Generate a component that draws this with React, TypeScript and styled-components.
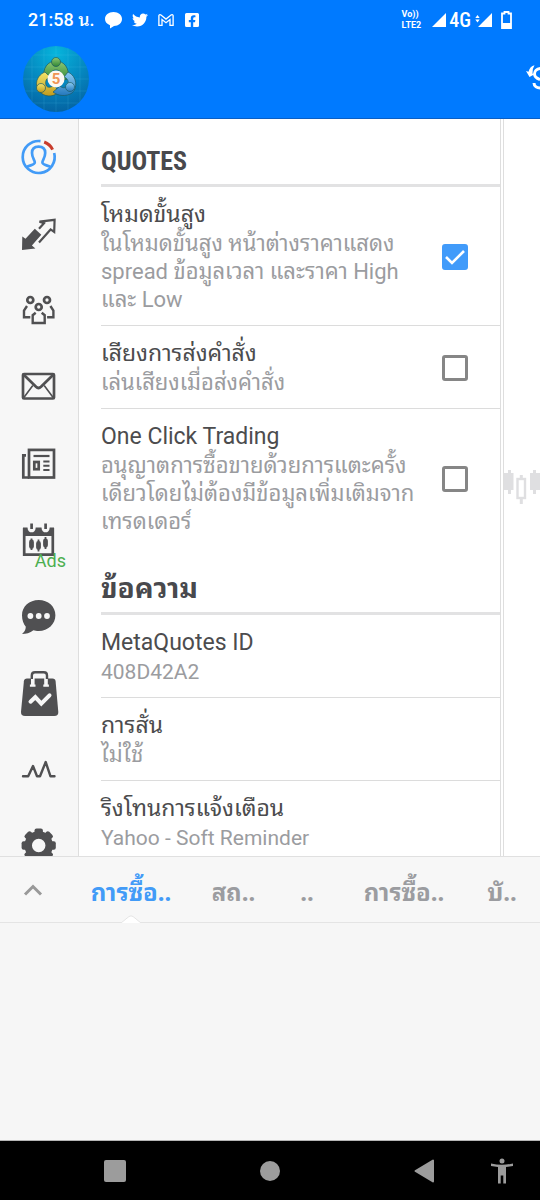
import React, { useState } from "react";
import styled, { createGlobalStyle } from "styled-components";
import { FaTwitter, FaFacebookSquare } from "react-icons/fa";

const ink = "#505052";
const muted = "#9b9ca0";
const blue = "#429bf7";
const thai = `"Noto Sans Thai Looped", "Noto Looped Thai", "Loma", "Noto Sans Thai", "Noto Sans", sans-serif`;

const GlobalStyle = createGlobalStyle`
  * { box-sizing: border-box; }
  body {
    margin: 0;
    background: #f6f6f6;
    font-family: Roboto, ${thai};
  }
  button { font: inherit; border: 0; padding: 0; background: none; cursor: pointer; }
`;

const Screen = styled.div`
  display: flex;
  flex-direction: column;
  height: 100vh;
`;

const Header = styled.header`
  background: #007aff;
  color: #fff;
  border-bottom: 1px solid #0a5fc4;
`;

const StatusBar = styled.div`
  display: flex;
  align-items: center;
  height: 40px;
  padding: 0 27px 0 28px;
`;

const Clock = styled.time`
  font-size: 18px;
  font-weight: 500;
  line-height: 24px;
  white-space: nowrap;
  width: 76px;
`;

const StatusIcons = styled.div<{ $gap: number }>`
  display: flex;
  align-items: center;
  gap: ${(p) => p.$gap}px;
`;

const Signals = styled(StatusIcons)`
  margin-left: auto;
`;

const Volte = styled.span`
  display: grid;
  font-size: 9px;
  font-weight: 700;
  line-height: 11px;
  margin-right: 8px;
`;

const Network = styled.span`
  font-family: "Roboto Condensed", Roboto, sans-serif;
  font-size: 20px;
  font-weight: 500;
  line-height: 20px;
`;

const AppBar = styled.div`
  display: flex;
  justify-content: space-between;
  align-items: center;
  height: 78px;
  padding-left: 22px;
`;

const BarButton = styled.button`
  display: flex;
  color: inherit;
`;

const Main = styled.main`
  display: flex;
  flex: 1;
  min-height: 0;
  overflow: hidden;
  background: #fff;
`;

const Sidebar = styled.nav`
  display: grid;
  grid-template-rows: repeat(10, 1fr);
  flex: 0 0 79px;
  height: 766px;
  background: #f7f7f7;
  border-right: 1px solid #dedede;
`;

const SideButton = styled.button`
  position: relative;
  display: grid;
  place-items: center;
  color: ${ink};
`;

const Glyph = styled.svg`
  width: 40px;
  height: 40px;
  overflow: visible;
  fill: none;
  stroke: currentColor;
  stroke-width: 2.7;
`;

const AdsTag = styled.span`
  position: absolute;
  right: 12px;
  bottom: 8px;
  color: #4caf50;
  font-size: 18px;
  line-height: 20px;
`;

const Settings = styled.div`
  flex: 1;
  min-width: 0;
  padding-left: 22px;
  border-right: 1px solid #dedede;
`;

const Heading = styled.h2<{ $size?: number }>`
  margin: 0;
  padding: 26px 0 7px;
  border-bottom: 3px solid #e2e2e3;
  color: #48494d;
  font-family: "Roboto Condensed", Roboto, ${thai};
  font-size: ${(p) => p.$size ?? 26}px;
  font-weight: 700;
  line-height: 32px;
`;

const Row = styled.div<{ $last?: boolean }>`
  display: flex;
  align-items: center;
  justify-content: space-between;
  padding: 13px 32px 11px 0;
  border-bottom: ${(p) => (p.$last ? "0" : "1px solid #dcdcdc")};
`;

const RowText = styled.label`
  display: block;
  white-space: nowrap;
`;

const RowTitle = styled.span`
  display: block;
  color: #4c4c4e;
  font-size: 23px;
  line-height: 30px;
`;

const RowNote = styled.span<{ $latin: boolean }>`
  display: block;
  color: ${muted};
  font-size: ${(p) => (p.$latin ? 21 : 22)}px;
  line-height: 28px;
`;

const Tick = styled.input`
  appearance: none;
  flex: none;
  width: 26px;
  height: 26px;
  margin: 0;
  border: 3px solid #868686;
  border-radius: 3px;
  &:checked {
    border-color: #419bfa;
    background: #419bfa url("data:image/svg+xml,%3Csvg xmlns='http://www.w3.org/2000/svg' viewBox='0 0 20 20'%3E%3Cpath d='M1 10l6 6L19 4' fill='none' stroke='white' stroke-width='2.6'/%3E%3C/svg%3E") center / 20px no-repeat;
  }
`;

const ChartPanel = styled.aside`
  display: flex;
  align-items: center;
  flex: 0 0 36px;
  margin-left: 2px;
  border-left: 1px solid #dedede;
`;

const Tabs = styled.nav`
  display: grid;
  grid-template-columns: 65fr 132fr 73fr 74fr 120fr 76fr;
  height: 67px;
  border-top: 1px solid #e0e0e0;
  border-bottom: 1px solid #e4e4e4;
  background: #f7f7f7;
`;

const Tab = styled.button<{ $active?: boolean }>`
  position: relative;
  display: grid;
  place-items: center;
  color: ${(p) => (p.$active ? blue : muted)};
  font-family: ${thai};
  font-size: 24px;
  font-weight: 700;
  line-height: 32px;
  white-space: nowrap;
`;

const Notch = styled.svg`
  position: absolute;
  bottom: -1px;
  left: 50%;
  margin-left: -10px;
`;

const EmptyPane = styled.section`
  height: 218px;
  background: #f6f6f6;
  border-bottom: 1px solid #b5b5b5;
`;

const SystemNav = styled.footer`
  display: grid;
  grid-template-columns: 74fr 82fr 228fr 80fr 76fr;
  align-items: center;
  height: 59px;
  background: #000;
`;

const SystemButton = styled.button<{ $column: string }>`
  grid-column: ${(p) => p.$column};
  display: grid;
  place-items: center;
`;

const Logo = () => (
  <svg width="68" height="68" viewBox="0 0 68 68" aria-hidden="true">
    <defs>
      <radialGradient id="disc" cx=".5" cy=".1" r=".95">
        <stop offset="0" stopColor="#06b5dc" />
        <stop offset=".55" stopColor="#0584bd" />
        <stop offset="1" stopColor="#045f9e" />
      </radialGradient>
      <linearGradient id="green" x2="0" y2="1"><stop stopColor="#8fc973" /><stop offset="1" stopColor="#2f8534" /></linearGradient>
      <linearGradient id="gold" x2="0" y2="1"><stop stopColor="#f3e56b" /><stop offset="1" stopColor="#c09a1c" /></linearGradient>
      <linearGradient id="sky" x2="0" y2="1"><stop stopColor="#8ccdf3" /><stop offset="1" stopColor="#2478bd" /></linearGradient>
      <clipPath id="round"><circle cx="34" cy="34" r="33" /></clipPath>
    </defs>
    <circle cx="34" cy="34" r="33" fill="url(#disc)" />
    <path clipPath="url(#round)" d="M10 0V68M22 0V68M34 0V68M46 0V68M58 0V68M0 10H68M0 22H68M0 34H68M0 46H68M0 58H68" stroke="#5bd0ee" strokeOpacity=".16" fill="none" />
    <g stroke="#1d5a62" strokeWidth=".7">
      <path d="M22 34C20 23 26 16 34 16s14 7 12 18l-7 2c1-7 0-11-5-11s-6 4-5 11z" fill="url(#green)" />
      <path d="M23 27C13 31 12 43 19 48c6 5 14 3 18-1l-5-7c-3 3-7 3-8 0-1-3 0-7 4-8z" fill="url(#gold)" />
      <path d="M46 27c9 4 10 16 4 21-6 4-14 3-19-1l7-6c3 3 7 2 8-2 1-3-1-6-4-7z" fill="url(#sky)" />
      <circle cx="34" cy="17" r="4.500" fill="url(#green)" />
      <circle cx="19" cy="43" r="4.500" fill="url(#gold)" />
      <circle cx="48" cy="42" r="4.500" fill="url(#sky)" />
    </g>
    <circle cx="34" cy="34" r="8.500" fill="#fbf8f3" />
    <text x="34" y="39" textAnchor="middle" fontFamily="Roboto" fontSize="15" fontWeight="700" fill="#ef9454">5</text>
  </svg>
);

const ProfileIcon = () => (
  <Glyph viewBox="0 0 40 40" color={blue}>
    <path d="M21.500 4.100A16 16 0 1 0 35.200 16" />
    <path d="M25.200 5Q31 7.200 33.600 12.600" stroke="#c83c2c" strokeWidth="3" />
    <path d="M7.500 30.200C10.500 28 15.600 28.200 15.800 25.500 16 23.500 13 21 13 16c0-4.200 2.400-6.300 6.600-6.300S26.200 11.800 26.200 16c0 5-3 7.500-2.800 9.500.2 2.700 5.300 2.500 8.300 4.700" />
  </Glyph>
);

const TradeIcon = () => (
  <Glyph viewBox="0 0 40 40">
    <path d="M3 36 3.300 22.500l3.200 2.200 9.300-10 6.500 6-9.400 10.700 3.500 3.200z" fill="currentColor" stroke="none" />
    <path d="M20 14.800 25 9.200 20.500 7.600 35.600 5.800 35.200 18 31.600 15.400 20 28.500" strokeWidth="2.200" />
  </Glyph>
);

const PeopleIcon = () => (
  <Glyph viewBox="0 0 40 40">
    <circle cx="11.300" cy="10" r="3" /><circle cx="28" cy="10" r="3" /><circle cx="19.700" cy="17" r="3" />
    <path d="M8 16 5 20.500V27.300H11.300M31.400 16l3 4.500v6.800H28.100M16.700 22.800l-3 2.400v7.800h12v-7.800l-3-2.400" strokeWidth="2.400" />
  </Glyph>
);

const MailIcon = () => (
  <Glyph viewBox="0 0 40 40">
    <rect x="4" y="7" width="31" height="24.500" rx="1" />
    <path d="M4.500 7.500 17 19.800q2.500 2.400 5 0L34.500 7.500" />
    <path d="M13.800 18.500 4.500 31M25.200 18.500 34.500 31" strokeWidth="1.600" />
  </Glyph>
);

const NewsIcon = () => (
  <Glyph viewBox="0 0 40 40">
    <rect x="10" y="5.900" width="25" height="27.600" />
    <path d="M7 11.300H4.300V33.500H10" />
    <path d="M14.500 12H30.500" strokeWidth="2.200" />
    <rect x="15.300" y="18" width="4.400" height="7.200" />
    <path d="M24.300 17.500h6.200M24.300 21.700h6.200M24.300 25.900h6.200" strokeWidth="2" />
  </Glyph>
);

const CalendarIcon = () => (
  <Glyph viewBox="0 0 40 40">
    <path d="M5.200 8V34.600H33.800V8" />
    <path d="M4 7.400H8.500C8.600 14 16.600 14 16.700 7.400H22.500C22.600 14 30.600 14 30.700 7.400H35V16H4z" fill="currentColor" stroke="none" />
    <path d="M12.600 3.400V9M26.600 3.400V9" />
    <path d="M12.500 18.500V30M19.500 19.500V31.500M26.500 17V29" strokeWidth="1.800" />
    <path d="M12.500 22V26.500M19.500 23.500V27.500M26.500 20.800V25.300" strokeWidth="4.800" strokeLinecap="round" />
  </Glyph>
);

const ChatIcon = () => (
  <Glyph viewBox="0 0 40 40">
    <path d="M19.700 3c9.500 0 16.700 6.500 16.700 15.300S29 34 19.700 34c-2.200 0-3.700-.3-5.300-.8C11 36 7 37 3 37c2.200-1.700 3.700-4.300 3.800-7.300C4.500 27 3 23 3 18.300 3 9.500 10.300 3 19.700 3z" fill="currentColor" stroke="none" />
    <g fill="#f7f7f7" stroke="none"><circle cx="11.400" cy="19" r="2.900" /><circle cx="19.700" cy="19" r="2.900" /><circle cx="28" cy="19" r="2.900" /></g>
  </Glyph>
);

const MarketIcon = () => (
  <Glyph viewBox="0 0 40 40">
    <path d="M8 5.500H33.500q2.800 0 3.100 2.800L39.300 39q.2 4-4 4H6q-4.200 0-4-4L4.900 8.300Q5.200 5.500 8 5.500z" fill="currentColor" stroke="none" />
    <path d="M13.800 5V12.500M27 5V12.500" stroke="#f7f7f7" strokeWidth="3.600" />
    <path d="M10.900 12.700h5.600M24.300 12.700h5.600" stroke="#f7f7f7" strokeWidth="2.200" />
    <path d="M12.800 6V2.500q0-3.200 3.200-3.200h8.800q3.200 0 3.200 3.200V6" strokeWidth="2.400" />
    <path d="M11.500 28.700 16.300 24.200 22.300 30.700 30.500 22.300" stroke="#f7f7f7" strokeWidth="4" strokeLinecap="round" />
  </Glyph>
);

const SignalsIcon = () => (
  <Glyph viewBox="0 0 40 40" strokeLinejoin="round" strokeLinecap="round">
    <path d="M4 26.300H9.200L14 16 18 26.300H21L26.700 12 31.500 26.300H35.500" strokeWidth="2.400" />
  </Glyph>
);

const GearIcon = () => (
  <Glyph viewBox="0 0 40 40">
    <circle cx="19.700" cy="18.500" r="10.500" strokeWidth="7.500" />
    <g fill="currentColor" stroke="none">
      {[0, 45, 90, 135, 180, 225, 270, 315].map((a) => (
        <rect key={a} x="15.500" y="1.400" width="8.400" height="8" rx="2" transform={`rotate(${a} 19.700 18.500)`} />
      ))}
    </g>
  </Glyph>
);

const sideItems = [
  { label: "Account", Icon: ProfileIcon },
  { label: "Trade", Icon: TradeIcon },
  { label: "Contacts", Icon: PeopleIcon },
  { label: "Mailbox", Icon: MailIcon },
  { label: "News", Icon: NewsIcon },
  { label: "Calendar", Icon: CalendarIcon, ads: true },
  { label: "Chat", Icon: ChatIcon },
  { label: "Market", Icon: MarketIcon },
  { label: "Signals", Icon: SignalsIcon },
  { label: "Settings", Icon: GearIcon },
];

type Option = { id: string; title: string; lines: string[]; checked?: boolean; latin?: boolean };

const quoteOptions: Option[] = [
  { id: "advanced", title: "โหมดขั้นสูง", lines: ["ในโหมดขั้นสูง หน้าต่างราคาแสดง", "spread ข้อมูลเวลา และราคา High", "และ Low"], checked: true },
  { id: "sound", title: "เสียงการส่งคำสั่ง", lines: ["เล่นเสียงเมื่อส่งคำสั่ง"], checked: false },
  { id: "oneclick", title: "One Click Trading", lines: ["อนุญาตการซื้อขายด้วยการแตะครั้ง", "เดียวโดยไม่ต้องมีข้อมูลเพิ่มเติมจาก", "เทรดเดอร์"], checked: false },
];

const messageOptions: Option[] = [
  { id: "mqid", title: "MetaQuotes ID", lines: ["408D42A2"], latin: true },
  { id: "vibrate", title: "การสั่น", lines: ["ไม่ใช้"] },
  { id: "ringtone", title: "ริงโทนการแจ้งเตือน", lines: ["Yahoo - Soft Reminder"], latin: true },
];

const tabs = ["การซื้อ..", "สถ..", "..", "การซื้อ..", "บั.."];

function OptionRow({ option, last }: { option: Option; last?: boolean }) {
  const [on, setOn] = useState(!!option.checked);
  const toggles = option.checked !== undefined;
  return (
    <Row $last={last}>
      <RowText as={toggles ? "label" : "div"} {...(toggles ? { htmlFor: option.id } : {})}>
        <RowTitle>{option.title}</RowTitle>
        {option.lines.map((line) => (
          <RowNote key={line} $latin={!!option.latin}>{line}</RowNote>
        ))}
      </RowText>
      {toggles && <Tick id={option.id} type="checkbox" checked={on} onChange={() => setOn(!on)} />}
    </Row>
  );
}

export default function App() {
  return (
    <Screen>
      <GlobalStyle />
      <Header>
        <StatusBar>
          <Clock>21:58 น.</Clock>
          <StatusIcons $gap={10}>
            <svg width="18" height="18" viewBox="0 0 18 18" fill="#fff"><path d="M9.500 1c5 0 8.500 3.100 8.500 7S14.500 15 10 15L6 17.500V14.200C2.800 13 1 10.800 1 8 1 4.100 4.500 1 9.500 1z" /></svg>
            <FaTwitter size={16} />
            <svg width="16" height="14" viewBox="0 0 18 14" fill="none" stroke="#fff" strokeWidth="1.500"><path d="M1 13V2.200Q1.300.5 3 1.200L9 6l6-4.800q1.700-.7 2 1V13H13.500V6.500L9 10 4.500 6.500V13z" /></svg>
            <FaFacebookSquare size={16} />
          </StatusIcons>
          <Signals $gap={3}>
            <Volte><span>Vo))</span><span>LTE2</span></Volte>
            <svg width="14" height="14" viewBox="0 0 14 14"><path d="M14 0V14H0z" fill="#fff" /></svg>
            <Network>4G</Network>
            <svg width="18" height="14" viewBox="0 0 18 14" fill="#fff"><path d="M18 0V14H4zM3.500 2 5.700 5H1.300zM3.500 9.500 5.700 6.500H1.300z" /></svg>
            <svg width="18" height="18" viewBox="0 0 18 18"><path d="M7.500 2.500H9.500V1H13.500V2.500H16V17H7V2.500z" fill="none" stroke="#fff" strokeWidth="1.800" /><path d="M7 12H16V17H7z" fill="#fff" /></svg>
          </Signals>
        </StatusBar>
        <AppBar>
          <Logo />
          <BarButton aria-label="Switch account">
            <svg width="16" height="30" viewBox="0 0 16 30" fill="#fff">
              <path d="M2 7 4.500 7.800Q6 2 10.500 1.200 8 5 8.500 9.500L10 10.500 5.500 13z" />
              <path d="M17 4.500C12.500 4.500 10.500 7.300 10.500 10c0 2.700 2 4.300 5.500 5.500M10 19c0 3.200 3 5 7 5" fill="none" stroke="#fff" strokeWidth="3" />
            </svg>
          </BarButton>
        </AppBar>
      </Header>
      <Main>
        <Sidebar>
          {sideItems.map(({ label, Icon, ads }) => (
            <SideButton key={label} aria-label={label}>
              <Icon />
              {ads && <AdsTag>Ads</AdsTag>}
            </SideButton>
          ))}
        </Sidebar>
        <Settings>
          <Heading>QUOTES</Heading>
          {quoteOptions.map((o, i) => (
            <OptionRow key={o.id} option={o} last={i === 2} />
          ))}
          <Heading $size={28}>ข้อความ</Heading>
          {messageOptions.map((o) => (
            <OptionRow key={o.id} option={o} />
          ))}
        </Settings>
        <ChartPanel>
          <svg width="36" height="36" viewBox="0 0 36 36" fill="#dfdfe1">
            <path d="M4 0h3v3h2.500v17H7v4H4v-4H0V3h4zM29 0h3v3h4v17h-4v4h-3v-4h-3V3h3z" />
            <path d="M17.300 5v4M17.300 29v5" stroke="#dfdfe1" strokeWidth="3" />
            <rect x="13.500" y="9" width="7.500" height="19" fill="none" stroke="#dfdfe1" strokeWidth="2.400" />
          </svg>
        </ChartPanel>
      </Main>
      <Tabs>
        <Tab aria-label="Expand">
          <svg width="20" height="12" viewBox="0 0 20 12" fill="none" stroke="#999" strokeWidth="3"><path d="M2 10.500 10 2.500 18 10.500" /></svg>
        </Tab>
        {tabs.map((t, i) => (
          <Tab key={i} $active={i === 0}>
            {t}
            {i === 0 && (
              <Notch width="20" height="8" viewBox="0 0 20 8"><path d="M0 8 8 1.500q2-1.300 4 0L20 8" fill="#fff" stroke="#e4e4e4" /></Notch>
            )}
          </Tab>
        ))}
      </Tabs>
      <EmptyPane />
      <SystemNav>
        <SystemButton $column="2" aria-label="Recent apps">
          <svg width="22" height="22"><rect width="22" height="22" rx="2" fill="#9c9c9c" /></svg>
        </SystemButton>
        <SystemButton $column="3" aria-label="Home">
          <svg width="20" height="20"><circle cx="10" cy="10" r="10" fill="#9c9c9c" /></svg>
        </SystemButton>
        <SystemButton $column="4" aria-label="Back">
          <svg width="20" height="24" viewBox="0 0 20 24"><path d="M19 1.500V22.500L1.500 12z" fill="#9c9c9c" stroke="#9c9c9c" strokeWidth="2" strokeLinejoin="round" /></svg>
        </SystemButton>
        <SystemButton $column="5" aria-label="Accessibility">
          <svg width="22" height="26" viewBox="0 0 22 26" fill="#9c9c9c"><circle cx="11" cy="3" r="2.500" /><path d="M0 5.500Q11 8 22 5.500V8L15 9V25.500H12.300V17.500H9.700V25.500H7V9L0 8z" /></svg>
        </SystemButton>
      </SystemNav>
    </Screen>
  );
}
